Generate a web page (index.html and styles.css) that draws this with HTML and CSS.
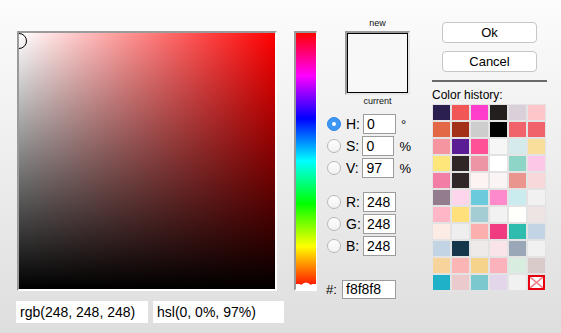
FILE: index.html
```html
<!DOCTYPE html>
<html>
<head>
<meta charset="utf-8">
<link rel="stylesheet" href="styles.css">
</head>
<body>
<div class="app">
  <div class="col-left">
    <div class="sv"><div class="sv-marker"></div></div>
    <div class="fields">
      <div class="field f-rgb">rgb(248, 248, 248)</div>
      <div class="field f-hsl">hsl(0, 0%, 97%)</div>
    </div>
  </div>
  <div class="hue">
    <svg class="hue-thumb" width="20" height="7" viewBox="0 0 20 7"><path d="M0 2 L4 2 L5 3 Q10 -2 15 3 L16 2 L20 2 L20 7 L0 7 Z" fill="#fff"/></svg>
  </div>
  <div class="col-mid">
    <div class="preview">
      <div class="cap">new</div>
      <div class="swatch"><div class="swatch-inner"></div></div>
      <div class="cap cap-cur">current</div>
    </div>
    <div class="group">
      <div class="row"><span class="radio on"></span><span class="lbl">H:</span><span class="input">0</span><span class="unit">°</span></div>
      <div class="row"><span class="radio"></span><span class="lbl">S:</span><span class="input">0</span><span class="unit">%</span></div>
      <div class="row"><span class="radio"></span><span class="lbl">V:</span><span class="input">97</span><span class="unit">%</span></div>
    </div>
    <div class="group group-rgb">
      <div class="row"><span class="radio"></span><span class="lbl">R:</span><span class="input">248</span></div>
      <div class="row"><span class="radio"></span><span class="lbl">G:</span><span class="input">248</span></div>
      <div class="row"><span class="radio"></span><span class="lbl">B:</span><span class="input">248</span></div>
    </div>
    <div class="hex-row"><span class="hex-lbl">#:</span><span class="input hex">f8f8f8</span></div>
  </div>
  <div class="col-right">
    <button class="btn">Ok</button>
    <button class="btn btn-cancel">Cancel</button>
    <div class="sep"></div>
    <div class="hist-label">Color history:</div>
    <div class="grid">
      <span class="cell" style="background:#2a1f4f"></span>
      <span class="cell" style="background:#f25757"></span>
      <span class="cell" style="background:#ff3fcc"></span>
      <span class="cell" style="background:#231f1f"></span>
      <span class="cell" style="background:#d9d0da"></span>
      <span class="cell" style="background:#ffc6ca"></span>

      <span class="cell" style="background:#e36845"></span>
      <span class="cell" style="background:#a33018"></span>
      <span class="cell" style="background:#cdcdcd"></span>
      <span class="cell" style="background:#000000"></span>
      <span class="cell" style="background:#f0636b"></span>
      <span class="cell" style="background:#f0636b"></span>

      <span class="cell" style="background:#f5959f"></span>
      <span class="cell" style="background:#5a1d94"></span>
      <span class="cell" style="background:#ff5196"></span>
      <span class="cell" style="background:#f6f6f6"></span>
      <span class="cell" style="background:#d5eaea"></span>
      <span class="cell" style="background:#f8de9a"></span>

      <span class="cell" style="background:#ffe67a"></span>
      <span class="cell" style="background:#302626"></span>
      <span class="cell" style="background:#ee95a5"></span>
      <span class="cell" style="background:#ffffff"></span>
      <span class="cell" style="background:#8fd5c7"></span>
      <span class="cell" style="background:#fdc8e7"></span>

      <span class="cell" style="background:#f27ea6"></span>
      <span class="cell" style="background:#302828"></span>
      <span class="cell" style="background:#fdf3f3"></span>
      <span class="cell" style="background:#fbf4f4"></span>
      <span class="cell" style="background:#ea968e"></span>
      <span class="cell" style="background:#f8d8d8"></span>

      <span class="cell" style="background:#947c8f"></span>
      <span class="cell" style="background:#fed6ec"></span>
      <span class="cell" style="background:#6bcadc"></span>
      <span class="cell" style="background:#fd8acb"></span>
      <span class="cell" style="background:#caecef"></span>
      <span class="cell" style="background:#f1f1f1"></span>

      <span class="cell" style="background:#ffb6c6"></span>
      <span class="cell" style="background:#ffe07a"></span>
      <span class="cell" style="background:#a4ccd3"></span>
      <span class="cell" style="background:#f2f2f2"></span>
      <span class="cell" style="background:#fffffc"></span>
      <span class="cell" style="background:#eee4e4"></span>

      <span class="cell" style="background:#fdebe6"></span>
      <span class="cell" style="background:#eeeeee"></span>
      <span class="cell" style="background:#fcb0ae"></span>
      <span class="cell" style="background:#f03b81"></span>
      <span class="cell" style="background:#2ebcae"></span>
      <span class="cell" style="background:#c3d5e4"></span>

      <span class="cell" style="background:#c3d5e4"></span>
      <span class="cell" style="background:#16374b"></span>
      <span class="cell" style="background:#eeeae9"></span>
      <span class="cell" style="background:#f9e4ea"></span>
      <span class="cell" style="background:#9aa7b6"></span>
      <span class="cell" style="background:#f1f1f1"></span>

      <span class="cell" style="background:#f6d49c"></span>
      <span class="cell" style="background:#fbb5b5"></span>
      <span class="cell" style="background:#f6d38a"></span>
      <span class="cell" style="background:#fbb2ba"></span>
      <span class="cell" style="background:#d8ece0"></span>
      <span class="cell" style="background:#dacbcb"></span>

      <span class="cell" style="background:#1eb1c8"></span>
      <span class="cell" style="background:#eacaca"></span>
      <span class="cell" style="background:#7cc8cf"></span>
      <span class="cell" style="background:#e3d6ea"></span>
      <span class="cell" style="background:#f1f1f1"></span>
      <span class="cell cell-clear"><svg width="13" height="11" viewBox="0 0 13 11"><path d="M0 0 L13 11 M13 0 L0 11" stroke="#f07d85" stroke-width="1.5"/></svg></span>
    </div>
  </div>
</div>
</body>
</html>
```

FILE: styles.css
```css
html, body {
  margin: 0;
  padding: 0;
}
body {
  width: 561px;
  height: 333px;
  overflow: hidden;
  background: linear-gradient(#fcfcfc, #dedede);
  font-family: "Liberation Sans", Arial, sans-serif;
  color: #000;
}
.app {
  display: flex;
  align-items: flex-start;
  padding: 22px 0 0 16px;
}

/* left: saturation/value square */
.col-left {
  width: 268px;
  padding-top: 9px;
}
.sv {
  position: relative;
  overflow: hidden;
  margin-left: 1px;
  width: 256px;
  height: 256px;
  border: 2px solid;
  border-color: #9a9a9a #fff #fff #9a9a9a;
  background:
    linear-gradient(to top, #000, rgba(0, 0, 0, 0)),
    linear-gradient(to right, #fff, #f00);
}
.sv-marker {
  position: absolute;
  left: -8px;
  top: 0;
  width: 14px;
  height: 14px;
  border: 1px solid #000;
  border-radius: 50%;
}
.fields {
  display: flex;
  gap: 5px;
  margin-top: 10px;
}
.field {
  box-sizing: border-box;
  height: 22px;
  background: #fff;
  font-size: 14px;
  line-height: 22px;
  padding-left: 4px;
  white-space: nowrap;
}
.f-rgb { width: 132px; }
.f-hsl { width: 131px; }

/* hue slider */
.hue {
  position: relative;
  margin-left: 10px;
  margin-top: 9px;
  width: 20px;
  height: 256px;
  border: 2px solid;
  border-width: 2px 1px 2px 2px;
  border-color: #9a9a9a #fff #fff #9a9a9a;
  background: linear-gradient(to bottom, #f00, #f0f 16.67%, #00f 33.33%, #0ff 50%, #0f0 66.67%, #ff0 83.33%, #f00);
}
.hue-thumb {
  position: absolute;
  left: 0;
  bottom: 0;
  display: block;
}

/* middle column */
.col-mid {
  margin-left: 9px;
  margin-top: -3px;
  width: 85px;
}
.preview {
  margin-left: 19px;
  width: 65px;
}
.cap {
  font-size: 9px;
  line-height: 9px;
  text-align: center;
  color: #111;
}
.swatch {
  box-sizing: border-box;
  margin-top: 3px;
  width: 65px;
  height: 64px;
  border: 2px solid;
  border-color: #9a9a9a #e6e6e6 #e6e6e6 #9a9a9a;
}
.swatch-inner {
  box-sizing: border-box;
  width: 100%;
  height: 100%;
  border: 1px solid #000;
  background: #f8f8f8;
}
.cap-cur {
  margin-top: 2px;
}
.group {
  display: flex;
  flex-direction: column;
  gap: 2px;
  margin-top: 8px;
}
.group-rgb {
  margin-top: 14px;
}
.row {
  display: flex;
  align-items: center;
  height: 20px;
}
.radio {
  box-sizing: border-box;
  width: 14px;
  height: 14px;
  margin-left: 1px;
  border-radius: 50%;
  border: 1px solid #b8b8b8;
  background: linear-gradient(#fff, #f1f1f1);
  flex: none;
}
.radio.on {
  position: relative;
  border-color: #2f86e8;
  background: #3d97f6;
}
.radio.on::after {
  content: "";
  position: absolute;
  left: 4px;
  top: 4px;
  width: 4px;
  height: 4px;
  border-radius: 50%;
  background: #fff;
}
.lbl {
  width: 17px;
  margin-left: 5px;
  font-size: 14px;
}
.input {
  box-sizing: border-box;
  width: 33px;
  height: 20px;
  border: 1px solid #9c9c9c;
  background: #fff;
  font-size: 14px;
  line-height: 18px;
  padding-left: 3px;
}
.unit {
  margin-left: 5px;
  font-size: 13px;
}
.hex-row {
  display: flex;
  align-items: center;
  margin-top: 24px;
}
.hex-lbl {
  width: 16px;
  font-size: 13px;
}
.input.hex {
  width: 54px;
  height: 19px;
  line-height: 17px;
}

/* right column */
.col-right {
  margin-left: 21px;
  width: 115px;
}
.btn {
  display: block;
  box-sizing: border-box;
  margin: 0 0 0 10px;
  padding: 0;
  width: 95px;
  height: 21px;
  border: 1px solid #c6c6c6;
  border-radius: 4px;
  background: #fff;
  font-family: "Liberation Sans", Arial, sans-serif;
  font-size: 13px;
  color: #000;
}
.btn-cancel {
  margin-top: 8px;
}
.sep {
  margin-top: 8px;
  height: 2px;
  background: #6a6a6a;
}
.hist-label {
  margin-top: 6px;
  margin-bottom: 2px;
  font-size: 12px;
  line-height: 14px;
}
.grid {
  display: grid;
  grid-template-columns: repeat(6, 17px);
  grid-auto-rows: 15px;
  gap: 2px;
  padding: 1px;
  width: 112px;
  background: #e3e3e3;
}
.cell {
  display: block;
}
.cell-clear {
  box-sizing: border-box;
  border: 2px solid #e8000f;
  background: #fff;
  display: flex;
  align-items: center;
  justify-content: center;
}
.cell-clear svg {
  display: block;
}
```
